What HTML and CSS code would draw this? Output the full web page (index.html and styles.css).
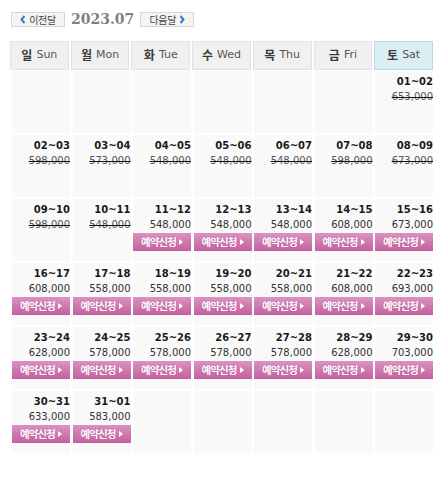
FILE: index.html
```html
<!DOCTYPE html>
<html lang="ko">
<head>
<meta charset="utf-8">
<title>2023.07</title>
<link rel="stylesheet" href="styles.css">
</head>
<body>
<div class="cal">
  <div class="nav">
    <a class="navbtn"><svg class="chev" width="6" height="9" viewBox="0 0 6 9"><polyline points="4.5,1 1.5,4.5 4.5,8" fill="none" stroke="#3b78c8" stroke-width="2"/></svg><span>이전달</span></a>
    <span class="title">2023.07</span>
    <a class="navbtn"><span>다음달</span><svg class="chev" width="6" height="9" viewBox="0 0 6 9"><polyline points="1.5,1 4.5,4.5 1.5,8" fill="none" stroke="#3b78c8" stroke-width="2"/></svg></a>
  </div>
  <div class="head">
    <div class="th"><b>일</b> Sun</div>
    <div class="th"><b>월</b> Mon</div>
    <div class="th"><b>화</b> Tue</div>
    <div class="th"><b>수</b> Wed</div>
    <div class="th"><b>목</b> Thu</div>
    <div class="th"><b>금</b> Fri</div>
    <div class="th sat"><b>토</b> Sat</div>
  </div>
  <div class="grid">
    <div class="td"></div><div class="td"></div><div class="td"></div><div class="td"></div><div class="td"></div><div class="td"></div>
    <div class="td"><div class="d">01~02</div><div class="p off">653,000</div></div>

    <div class="td"><div class="d">02~03</div><div class="p off">598,000</div></div>
    <div class="td"><div class="d">03~04</div><div class="p off">573,000</div></div>
    <div class="td"><div class="d">04~05</div><div class="p off">548,000</div></div>
    <div class="td"><div class="d">05~06</div><div class="p off">548,000</div></div>
    <div class="td"><div class="d">06~07</div><div class="p off">548,000</div></div>
    <div class="td"><div class="d">07~08</div><div class="p off">598,000</div></div>
    <div class="td"><div class="d">08~09</div><div class="p off">673,000</div></div>

    <div class="td"><div class="d">09~10</div><div class="p off">598,000</div></div>
    <div class="td"><div class="d">10~11</div><div class="p off">548,000</div></div>
    <div class="td"><div class="d">11~12</div><div class="p">548,000</div><a class="rsv">예약신청</a></div>
    <div class="td"><div class="d">12~13</div><div class="p">548,000</div><a class="rsv">예약신청</a></div>
    <div class="td"><div class="d">13~14</div><div class="p">548,000</div><a class="rsv">예약신청</a></div>
    <div class="td"><div class="d">14~15</div><div class="p">608,000</div><a class="rsv">예약신청</a></div>
    <div class="td"><div class="d">15~16</div><div class="p">673,000</div><a class="rsv">예약신청</a></div>

    <div class="td"><div class="d">16~17</div><div class="p">608,000</div><a class="rsv">예약신청</a></div>
    <div class="td"><div class="d">17~18</div><div class="p">558,000</div><a class="rsv">예약신청</a></div>
    <div class="td"><div class="d">18~19</div><div class="p">558,000</div><a class="rsv">예약신청</a></div>
    <div class="td"><div class="d">19~20</div><div class="p">558,000</div><a class="rsv">예약신청</a></div>
    <div class="td"><div class="d">20~21</div><div class="p">558,000</div><a class="rsv">예약신청</a></div>
    <div class="td"><div class="d">21~22</div><div class="p">608,000</div><a class="rsv">예약신청</a></div>
    <div class="td"><div class="d">22~23</div><div class="p">693,000</div><a class="rsv">예약신청</a></div>

    <div class="td"><div class="d">23~24</div><div class="p">628,000</div><a class="rsv">예약신청</a></div>
    <div class="td"><div class="d">24~25</div><div class="p">578,000</div><a class="rsv">예약신청</a></div>
    <div class="td"><div class="d">25~26</div><div class="p">578,000</div><a class="rsv">예약신청</a></div>
    <div class="td"><div class="d">26~27</div><div class="p">578,000</div><a class="rsv">예약신청</a></div>
    <div class="td"><div class="d">27~28</div><div class="p">578,000</div><a class="rsv">예약신청</a></div>
    <div class="td"><div class="d">28~29</div><div class="p">628,000</div><a class="rsv">예약신청</a></div>
    <div class="td"><div class="d">29~30</div><div class="p">703,000</div><a class="rsv">예약신청</a></div>

    <div class="td"><div class="d">30~31</div><div class="p">633,000</div><a class="rsv">예약신청</a></div>
    <div class="td"><div class="d">31~01</div><div class="p">583,000</div><a class="rsv">예약신청</a></div>
    <div class="td"></div><div class="td"></div><div class="td"></div><div class="td"></div><div class="td"></div>
  </div>
</div>
</body>
</html>
```
FILE: styles.css
```css
html, body {
  margin: 0;
  padding: 0;
  background: #fff;
}
body {
  font-family: "DejaVu Sans", Verdana, sans-serif;
  font-size: 10px;
  color: #333;
}
.cal {
  width: 423px;
  padding: 11px 0 0 10px;
}
.nav {
  display: flex;
  align-items: center;
  gap: 6px;
  height: 16px;
  margin-left: 1px;
}
.navbtn {
  display: flex;
  align-items: center;
  gap: 3px;
  box-sizing: border-box;
  width: 54px;
  height: 15px;
  padding: 0 4px;
  justify-content: center;
  background: #f4f4f4;
  border: 1px solid #d8d8d8;
  font-family: "Noto Sans CJK KR", sans-serif;
  font-size: 10px;
  color: #444;
  letter-spacing: -0.3px;
}
.chev { display: block; }
.title {
  font-family: "DejaVu Serif", serif;
  font-weight: bold;
  font-size: 14px;
  color: #7b7f86;
  line-height: 16px;
}
.head {
  display: grid;
  grid-template-columns: repeat(7, 1fr);
  column-gap: 2px;
  margin-top: 14px;
}
.th {
  box-sizing: border-box;
  height: 29px;
  border: 1px solid #e2e2e2;
  background: #f0f0f0;
  display: flex;
  align-items: center;
  justify-content: center;
  gap: 4px;
  font-family: "DejaVu Sans", sans-serif;
  font-size: 11px;
  color: #555;
  padding-bottom: 2px;
}
.th b {
  font-family: "Noto Sans CJK KR", sans-serif;
  font-weight: bold;
  font-size: 12px;
  color: #3a3a3a;
}
.th.sat {
  background: #dbeef4;
  border-color: #b8d8e4;
}
.grid {
  display: grid;
  grid-template-columns: repeat(7, 1fr);
  grid-auto-rows: 62px;
  column-gap: 2.5px;
  row-gap: 2px;
  margin-top: 1px;
  padding-left: 2px;
}
.td {
  background: #f9f9f9;
  padding-top: 3px;
  text-align: right;
  line-height: 15px;
  white-space: nowrap;
}
.d {
  font-weight: bold;
  color: #1a1a1a;
}
.p { color: #333; }
.p.off {
  color: #555;
  text-decoration: line-through;
  text-decoration-color: #111;
}
.rsv {
  display: flex;
  align-items: center;
  justify-content: center;
  gap: 3px;
  height: 18px;
  margin-top: 1px;
  background: linear-gradient(#db92c1, #c4609f);
  color: #fff;
  font-family: "Noto Sans CJK KR", sans-serif;
  font-size: 10.5px;
  font-weight: bold;
  letter-spacing: -0.9px;
  text-shadow: 0 0 1px #a34a82;
  line-height: 18px;
}
.rsv::after {
  content: "";
  width: 0;
  height: 0;
  border-top: 3.5px solid transparent;
  border-bottom: 3.5px solid transparent;
  border-left: 4px solid #fff;
}
```
